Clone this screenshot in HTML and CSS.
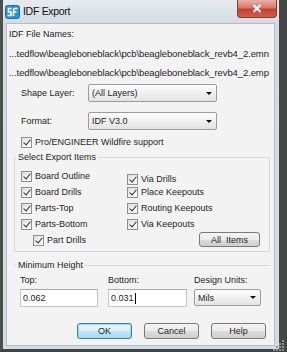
FILE: index.html
```html
<!DOCTYPE html>
<html lang="en">
<head>
    <meta charset="UTF-8">
    <title>IDF Export</title>
    <link rel="stylesheet" href="styles.css">
</head>
<body>
    <div class="window">
        <div class="titlebar">
            <span class="appIcon">
                <svg width="15" height="14" viewBox="0 0 15 14">
                    <rect x="0.5" y="0.5" width="14" height="13" rx="2" fill="#2c93d3" stroke="#1d6fa6"/>
                    <path d="M6.5 3.5 H3.5 V7 H6 V10.5 H2.5" fill="none" stroke="#fff" stroke-width="1.6"/>
                    <path d="M8.5 11 V5 Q8.5 3.5 10 3.5 H12.5 M8.5 7 H11.5" fill="none" stroke="#fff" stroke-width="1.6"/>
                </svg>
            </span>
            <span class="title">IDF Export</span>
            <span class="closeBtn">
                <svg width="10" height="9" viewBox="0 0 10 9">
                    <path d="M1.5 1 L8.5 8 M8.5 1 L1.5 8" stroke="#fff" stroke-width="2.2"/>
                </svg>
            </span>
        </div>

        <div class="client">
            <div class="files">
                <div>IDF File Names:</div>
                <div class="path">...tedflow\beagleboneblack\pcb\beagleboneblack_revb4_2.emn</div>
                <div class="path">...tedflow\beagleboneblack\pcb\beagleboneblack_revb4_2.emp</div>
            </div>

            <div class="fieldRow">
                <span class="fieldLabel">Shape Layer:</span>
                <div class="combo">(All Layers)<span class="arrow"></span></div>
            </div>
            <div class="fieldRow formatRow">
                <span class="fieldLabel">Format:</span>
                <div class="combo">IDF V3.0<span class="arrow"></span></div>
            </div>

            <div class="check proRow"><span class="cb"></span>Pro/ENGINEER Wildfire support</div>

            <fieldset class="group">
                <legend>Select Export Items</legend>
                <div class="items">
                    <div class="check"><span class="cb"></span>Board Outline</div>
                    <div class="check drop"><span class="cb"></span>Via Drills</div>
                    <div class="check"><span class="cb"></span>Board Drills</div>
                    <div class="check"><span class="cb"></span>Place Keepouts</div>
                    <div class="check"><span class="cb"></span>Parts-Top</div>
                    <div class="check"><span class="cb"></span>Routing Keepouts</div>
                    <div class="check"><span class="cb"></span>Parts-Bottom</div>
                    <div class="check"><span class="cb"></span>Via Keepouts</div>
                    <div class="check sub"><span class="cb"></span>Part Drills</div>
                    <div><span class="btn allBtn">All&nbsp; Items</span></div>
                </div>
            </fieldset>

            <fieldset class="group minGroup">
                <legend>Minimum Height</legend>
                <div class="heights">
                    <div class="col colTop">
                        <span>Top:</span>
                        <div class="textBox">0.062</div>
                    </div>
                    <div class="col colBottom">
                        <span>Bottom:</span>
                        <div class="textBox">0.031<span class="caret"></span></div>
                    </div>
                    <div class="col colUnits">
                        <span>Design Units:</span>
                        <div class="combo units">Mils<span class="arrow"></span></div>
                    </div>
                </div>
            </fieldset>

            <div class="buttons">
                <span class="btn okBtn">OK</span>
                <span class="btn">Cancel</span>
                <span class="btn">Help</span>
            </div>
        </div>
        <!-- size grip sits over the frame corner -->
        <svg class="grip" width="12" height="12" viewBox="0 0 12 12">
            <g fill="#8a8f94">
                <rect x="9" y="1" width="2" height="2"/>
                <rect x="6" y="4" width="2" height="2"/>
                <rect x="9" y="4" width="2" height="2"/>
                <rect x="3" y="7" width="2" height="2"/>
                <rect x="6" y="7" width="2" height="2"/>
                <rect x="9" y="7" width="2" height="2"/>
                <rect x="0" y="10" width="2" height="2"/>
                <rect x="3" y="10" width="2" height="2"/>
                <rect x="6" y="10" width="2" height="2"/>
                <rect x="9" y="10" width="2" height="2"/>
            </g>
        </svg>
    </div>
</body>
</html>
```

FILE: styles.css
```css
*{
    margin: 0px;
    padding: 0px;
    box-sizing: border-box;
}
body{
    background: #fff;
    font-family: "Liberation Sans", Arial, sans-serif;
    font-size: 9px;
    color: #1e1e1e;
}
.window{
    position: relative;
    width: 287px;
    height: 352px;
    display: flex;
    flex-direction: column;
    padding: 0px 4px 3px 3px;
    background: linear-gradient(#e6ebf0, #d2dbe3 24px, #d5dce3);
    border-left: 3px solid #4a504c;
    border-right: 8px solid #434845;
    border-bottom: 3px solid #3e4340;
}
.titlebar{
    height: 23px;
    display: flex;
    align-items: flex-start;
}
.appIcon{
    margin: 5px 0px 0px -1px;
    height: 14px;
}
.title{
    margin: 5px 0px 0px 3px;
    font-size: 10.5px;
    letter-spacing: -0.3px;
    color: #111;
}
.closeBtn{
    margin: 0px -2px 0px auto;
    width: 40px;
    height: 18px;
    display: flex;
    align-items: center;
    justify-content: center;
    border: 1px solid #8b3a2e;
    border-top: none;
    border-radius: 0px 0px 4px 4px;
    background: linear-gradient(#e9b2a4, #d9796a 45%, #c6402f 55%, #d0604c);
}
.client{
    flex: 1;
    display: flex;
    flex-direction: column;
    padding: 0px 2px;
    background: #f3f3f3;
    border: 1px solid #b4bdc6;
}
.files{
    padding-top: 1px;
    line-height: 19px;
}
.files .path{
    font-size: 9.5px;
    letter-spacing: -0.1px;
    white-space: nowrap;
}
.fieldRow{
    display: flex;
    align-items: center;
    margin-top: 2px;
    height: 18px;
}
.formatRow{
    margin-top: 10px;
}
.fieldLabel{
    width: 67px;
    margin-left: 12px;
}
.combo{
    width: 129px;
    height: 18px;
    display: flex;
    align-items: center;
    padding-left: 3px;
    border: 1px solid #9c9c9c;
    border-radius: 2px;
    background: linear-gradient(#fdfdfd, #f0f0f0 50%, #e3e3e3);
}
.arrow{
    margin: 0px 4px 0px auto;
    width: 0px;
    height: 0px;
    border-left: 3px solid transparent;
    border-right: 3px solid transparent;
    border-top: 3px solid #111;
}
.check{
    display: flex;
    align-items: center;
    height: 16px;
    white-space: nowrap;
}
.cb{
    width: 11px;
    height: 11px;
    margin-right: 3px;
    display: flex;
    align-items: center;
    justify-content: center;
    border: 1px solid #8e8f8f;
    background: linear-gradient(135deg, #dcdcdc, #f6f6f6 60%, #fff);
}
.cb::after{
    content: "";
    width: 3px;
    height: 6px;
    margin-top: -2px;
    border-right: 1.5px solid #2b2f3a;
    border-bottom: 1.5px solid #2b2f3a;
    transform: rotate(40deg);
}
.proRow{
    margin: 5px 0px 0px 12px;
    height: 14px;
}
.group{
    margin: 2px 2px 0px 5px;
    padding: 0px 0px 3px 1px;
    border: 1px solid #d3d9de;
}
.group legend{
    padding: 0px 2px;
    height: 12px;
    line-height: 12px;
}
.items{
    display: grid;
    grid-template-columns: 106px 1fr;
    grid-auto-rows: 16px;
    margin: 5px 0px 0px 5px;
}
.items .drop{
    margin-top: 3px;
}
.items .sub{
    padding-left: 12px;
}
.btn{
    display: flex;
    align-items: center;
    justify-content: center;
    width: 55px;
    height: 16px;
    border: 1px solid #7a7a7a;
    border-radius: 3px;
    background: linear-gradient(#f4f4f4, #ebebeb 50%, #dddddd 51%, #cfcfcf);
}
.allBtn{
    margin-left: 72px;
    width: 61px;
    height: 15px;
}
.minGroup{
    margin-top: 7px;
    padding: 0px 0px 0px 2px;
    border: none;
    border-top: 1px solid #d3d9de;
}
.heights{
    display: flex;
    margin: 3px 0px 0px 4px;
}
.col{
    display: flex;
    flex-direction: column;
    line-height: 12px;
}
.colTop{
    width: 88px;
}
.colBottom{
    width: 86px;
}
.textBox{
    margin-top: 3px;
    width: 78px;
    height: 18px;
    display: flex;
    align-items: center;
    padding-left: 2px;
    background: #fff;
    border: 1px solid #c4c8cc;
    border-top-color: #a5aab0;
}
.colBottom .textBox{
    width: 79px;
}
.caret{
    width: 1px;
    height: 11px;
    margin-left: 1px;
    background: #000;
}
.units{
    margin-top: 3px;
    width: 67px;
    height: 17px;
}
.buttons{
    display: flex;
    justify-content: flex-end;
    gap: 12px;
    margin: 16px 6px 0px 0px;
}
.okBtn{
    border-color: #3c7fb1;
    background: linear-gradient(#eaf6fd, #d9f0fc 50%, #bee6fd 51%, #a7d9f5);
    box-shadow: inset 0px 0px 0px 1px #9fd5f2;
}
.grip{
    position: absolute;
    right: -6px;
    bottom: -2px;
}
```
